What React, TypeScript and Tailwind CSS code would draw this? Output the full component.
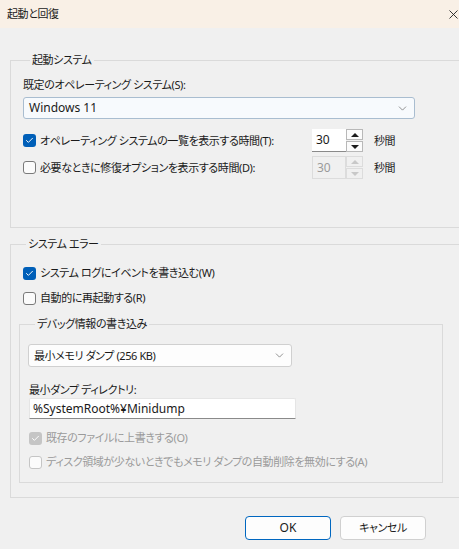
import { Check, ChevronDown, X } from 'lucide-react'

const font = "[font-family:'Noto_Sans','Noto_Sans_CJK_JP',sans-serif] [font-feature-settings:'palt']"

function CheckBox({ checked, disabled }: { checked?: boolean; disabled?: boolean }) {
  if (checked) {
    return (
      <span
        className={`flex h-[13px] w-[13px] shrink-0 items-center justify-center rounded-[3px] ${
          disabled ? 'bg-[#c5c5c5]' : 'bg-[#005fb8]'
        }`}
      >
        <Check size={9} strokeWidth={2.5} className="text-white" />
      </span>
    )
  }
  return (
    <span
      className={`h-[13px] w-[13px] shrink-0 rounded-[3px] border bg-[#fbfbfb] ${
        disabled ? 'border-[#c5c5c5]' : 'border-[#7a7a7a]'
      }`}
    />
  )
}

function Spinner({ value, disabled }: { value: string; disabled?: boolean }) {
  const arrow = disabled ? 'border-[#c8c8c8]' : 'border-[#1a1a1a]'
  return (
    <div className="flex h-[23px] text-[12px] tracking-normal">
      <div
        className={`flex w-[34px] items-center pl-[4px] ${
          disabled ? 'border border-[#dcdcdc] text-[#9a9a9a]' : 'border-b border-[#8a8a8a] bg-white text-[#1a1a1a]'
        }`}
      >
        {value}
      </div>
      <div className="flex w-[17px] flex-col">
        <div className={`flex h-[11px] items-center justify-center border ${disabled ? 'border-[#dcdcdc]' : 'border-[#b8b8b8] bg-[#fbfbfb]'}`}>
          <span className={`h-0 w-0 border-x-[4px] border-b-[4px] border-x-transparent ${arrow}`} />
        </div>
        <div className={`mt-[1px] flex h-[11px] items-center justify-center border ${disabled ? 'border-[#dcdcdc]' : 'border-[#b8b8b8] bg-[#fbfbfb]'}`}>
          <span className={`h-0 w-0 border-x-[4px] border-t-[4px] border-x-transparent ${arrow}`} />
        </div>
      </div>
    </div>
  )
}

export default function App() {
  return (
    <div className={`h-[549px] w-[459px] overflow-hidden bg-[#f0f0f0] text-[11px] leading-[14px] tracking-[-0.4px] text-[#1a1a1a] ${font}`}>
      {/* Title bar */}
      <div className="flex h-[28px] items-center justify-between bg-[#f9f0e6] pl-[7px]">
        <span>起動と回復</span>
        <X size={15} strokeWidth={1.4} className="-mr-[2px] text-[#1a1a1a]" />
      </div>

      <div className="w-[480px] pl-[10px] pt-[25px]">
        {/* Startup */}
        <fieldset className="border border-[#dadada] pb-[48px] pl-[12px]">
          <legend className="ml-[7px] px-[2px]">起動システム</legend>
          <div className="mt-[11px]">既定のオペレーティング システム(S):</div>
          <div className="mt-[5px] flex h-[22px] w-[392px] items-center justify-between rounded-[3px] border border-[#a9bdd0] bg-[#f7fafd] pl-[5px] pr-[5px]">
            <span className="text-[12px] tracking-normal">Windows 11</span>
            <ChevronDown size={13} strokeWidth={1.2} className="text-[#5a5a5a]" />
          </div>
          <div className="mt-[10px] flex h-[23px] items-center">
            <CheckBox checked />
            <span className="ml-[4px] w-[272px]">オペレーティング システムの一覧を表示する時間(T):</span>
            <Spinner value="30" />
            <span className="ml-[11px]">秒間</span>
          </div>
          <div className="mt-[4px] flex h-[23px] items-center">
            <CheckBox />
            <span className="ml-[4px] w-[272px]">必要なときに修復オプションを表示する時間(D):</span>
            <Spinner value="30" disabled />
            <span className="ml-[11px]">秒間</span>
          </div>
        </fieldset>

        {/* System failure */}
        <fieldset className="mt-[9px] border border-[#dadada] pb-[14px] pl-[8px]">
          <legend className="ml-[7px] px-[2px]">システム エラー</legend>
          <div className="ml-[4px] mt-[12px] flex h-[20px] items-center">
            <CheckBox checked />
            <span className="ml-[4px]">システム ログにイベントを書き込む(W)</span>
          </div>
          <div className="ml-[4px] mt-[5px] flex h-[20px] items-center">
            <CheckBox />
            <span className="ml-[4px]">自動的に再起動する(R)</span>
          </div>

          <fieldset className="mt-[9px] w-[424px] border border-[#dadada] pb-[10px] pl-[8px]">
            <legend className="ml-[7px] px-[2px]">デバッグ情報の書き込み</legend>
            <div className="mt-[13px] flex h-[23px] w-[264px] items-center justify-between rounded-[3px] border border-[#d0d0d0] bg-[#fdfdfd] pl-[5px] pr-[5px]">
              <span>最小メモリ ダンプ (256 KB)</span>
              <ChevronDown size={13} strokeWidth={1.2} className="text-[#5a5a5a]" />
            </div>
            <div className="ml-[1px] mt-[16px]">最小ダンプ ディレクトリ:</div>
            <div className="ml-[1px] mt-[1px] flex h-[21px] w-[267px] items-center rounded-t-[2px] border border-b-[#8a8a8a] border-[#e5e5e5] bg-white pl-[3px] text-[12px] tracking-normal">
              %SystemRoot%¥Minidump
            </div>
            <div className="ml-[1px] mt-[9px] flex h-[20px] items-center text-[#9a9a9a]">
              <CheckBox checked disabled />
              <span className="ml-[4px]">既存のファイルに上書きする(O)</span>
            </div>
            <div className="ml-[1px] mt-[4px] flex h-[20px] items-center text-[#9a9a9a]">
              <CheckBox disabled />
              <span className="ml-[4px]">ディスク領域が少ないときでもメモリ ダンプの自動削除を無効にする(A)</span>
            </div>
          </fieldset>
        </fieldset>
      </div>

      {/* Dialog buttons */}
      <div className="mt-[18px] flex justify-end gap-[9px] pr-[33px]">
        <button className="h-[24px] w-[86px] rounded-[4px] border border-[#0067c0] bg-[#fdfdfd] text-[12px] tracking-normal">OK</button>
        <button className="h-[24px] w-[86px] rounded-[4px] border border-[#d0d0d0] bg-[#fdfdfd]">キャンセル</button>
      </div>
    </div>
  )
}
